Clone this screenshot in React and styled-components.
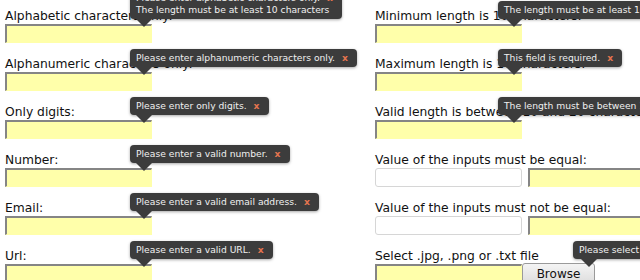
import React from "react";
import styled, { createGlobalStyle } from "styled-components";

const GlobalStyle = createGlobalStyle`
  html, body {
    margin: 0;
    padding: 0;
    overflow: hidden;
    background: #fff;
  }
  body {
    font-family: "DejaVu Sans", Verdana, sans-serif;
    color: #111;
  }
`;

const Form = styled.div`
  display: grid;
  grid-template-columns: 370px 1fr;
  width: 640px;
  box-sizing: border-box;
  padding: 9px 0 0 5px;
`;

const Column = styled.div`
  display: flex;
  flex-direction: column;
  gap: 14px;
`;

const Field = styled.div`
  display: flex;
  flex-direction: column;
`;

const Label = styled.label`
  display: block;
  font-size: 12.3px;
  line-height: 15px;
  white-space: nowrap;
`;

const Row = styled.div`
  position: relative;
  display: flex;
  gap: ${(p) => p.$gap || 0}px;
  height: 19px;
`;

const TextInput = styled.div`
  box-sizing: border-box;
  flex: none;
  width: 147px;
  height: 19px;
  background: ${(p) => (p.$valid ? "#ffffff" : "#ffffaa")};
  border-style: solid;
  border-width: ${(p) => (p.$valid ? "1px" : "2px 1px 1px 2px")};
  border-color: ${(p) =>
    p.$valid ? "#d6d6d6" : "#858585 #ffffaa #ffffaa #858585"};
  border-radius: ${(p) => (p.$valid ? "3px" : "0")};
`;

const BrowseButton = styled.button`
  box-sizing: border-box;
  flex: none;
  width: 73px;
  height: 22px;
  margin-top: -1px;
  padding: 0;
  font-family: "DejaVu Sans", Verdana, sans-serif;
  font-size: 12px;
  color: #111;
  background: linear-gradient(#f4f4f4, #dcdcdc);
  border: 1px solid #9a9a9a;
  border-radius: 3px;
`;

const Tip = styled.div`
  position: absolute;
  z-index: 2;
  left: ${(p) => p.$left}px;
  bottom: calc(100% + 5px);
  box-sizing: border-box;
  padding: 3px 9px 3px 6px;
  background: #3c3c3c;
  color: #f0f0f0;
  font-family: "DejaVu Sans", Tahoma, sans-serif;
  font-size: 9.2px;
  line-height: 12px;
  white-space: nowrap;
  border-radius: 4px;
  box-shadow: 0 1px 3px rgba(0, 0, 0, 0.35);
`;

const TipLine = styled.div``;

const Arrow = styled.span`
  position: absolute;
  left: ${(p) => p.$left || 6}px;
  bottom: -8px;
  width: 0;
  height: 0;
  border-style: solid;
  border-width: 8px 8px 0;
  border-color: #3c3c3c transparent transparent;
`;

const Close = styled.span`
  margin-left: 7px;
  color: #e5744f;
  font-weight: bold;
`;

function Tooltip({ left, arrow, lines }) {
  return (
    <Tip $left={left}>
      {lines.map((l, i) => (
        <TipLine key={i}>
          {l}
          {i === 0 && <Close>x</Close>}
        </TipLine>
      ))}
      <Arrow $left={arrow} />
    </Tip>
  );
}

const leftFields = [
  {
    label: "Alphabetic characters only:",
    tip: [
      "Please enter alphabetic characters only.",
      "The length must be at least 10 characters",
    ],
  },
  { label: "Alphanumeric characters only:", tip: ["Please enter alphanumeric characters only."] },
  { label: "Only digits:", tip: ["Please enter only digits."] },
  { label: "Number:", tip: ["Please enter a valid number."] },
  { label: "Email:", tip: ["Please enter a valid email address."] },
  { label: "Url:", tip: ["Please enter a valid URL."] },
];

export default function App() {
  return (
    <>
      <GlobalStyle />
      <Form>
        <Column>
          {leftFields.map((f) => (
            <Field key={f.label}>
              <Label>{f.label}</Label>
              <Row>
                <TextInput />
                <Tooltip left={125} lines={f.tip} />
              </Row>
            </Field>
          ))}
        </Column>
        <Column>
          <Field>
            <Label>Minimum length is 10 characters:</Label>
            <Row>
              <TextInput />
              <Tooltip left={123} arrow={8} lines={["The length must be at least 10 characters"]} />
            </Row>
          </Field>
          <Field>
            <Label>Maximum length is 10 characters:</Label>
            <Row>
              <TextInput />
              <Tooltip left={123} arrow={8} lines={["This field is required."]} />
            </Row>
          </Field>
          <Field>
            <Label>Valid length is between 10 and 20 characters:</Label>
            <Row>
              <TextInput />
              <Tooltip left={123} arrow={8} lines={["The length must be between 10 and 20 characters"]} />
            </Row>
          </Field>
          <Field>
            <Label>Value of the inputs must be equal:</Label>
            <Row $gap={6}>
              <TextInput $valid />
              <TextInput />
            </Row>
          </Field>
          <Field>
            <Label>Value of the inputs must not be equal:</Label>
            <Row $gap={6}>
              <TextInput $valid />
              <TextInput />
            </Row>
          </Field>
          <Field>
            <Label>Select .jpg, .png or .txt file</Label>
            <Row>
              <TextInput />
              <BrowseButton type="button">Browse</BrowseButton>
              <Tooltip left={198} arrow={8} lines={["Please select file with a valid extension."]} />
            </Row>
          </Field>
        </Column>
      </Form>
    </>
  );
}
